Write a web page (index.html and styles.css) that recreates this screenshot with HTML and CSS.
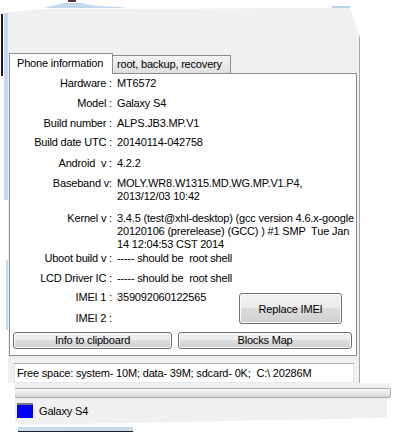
FILE: index.html
```
<!DOCTYPE html>
<html>
    <head>
        <meta charset="UTF-8" />
        <title>Phone information</title>
        <link rel="stylesheet" href="styles.css">
    </head>
    <body>
        <div class="topedge">
            <svg width="398" height="8" viewBox="0 0 398 8">
                <path d="M44 8 L52 6 L60 4 L64 3 L82 3 L90 5 L100 6 L120 7 L126 8 Z" fill="#c3d7ee"/>
                <rect x="68" y="0" width="8" height="2" fill="#5b3050"/>
                <rect x="332" y="6" width="18" height="2" fill="#b9d1f0"/>
            </svg>
        </div>
        <div class="frame">
            <div class="fringe"></div>
            <div class="win">
                <div class="upper">
                    <div class="tabs">
                        <div class="tab active">Phone information</div>
                        <div class="tab">root, backup, recovery</div>
                    </div>
                    <div class="panel">
                        <div class="row"><span class="lbl">Hardware :</span><span class="val">MT6572</span></div>
                        <div class="row"><span class="lbl">Model :</span><span class="val">Galaxy S4</span></div>
                        <div class="row"><span class="lbl">Build number :</span><span class="val">ALPS.JB3.MP.V1</span></div>
                        <div class="row g6"><span class="lbl">Build date UTC :</span><span class="val">20140114-042758</span></div>
                        <div class="row g8"><span class="lbl">Android&nbsp; v :</span><span class="val">4.2.2</span></div>
                        <div class="row"><span class="lbl">Baseband v:</span><span class="val">MOLY.WR8.W1315.MD.WG.MP.V1.P4,<br>2013/12/03 10:42</span></div>
                        <div class="row g9"><span class="lbl">Kernel v :</span><span class="val">3.4.5 (test@xhl-desktop) (gcc version 4.6.x-google<br>20120106 (prerelease) (GCC) ) #1 SMP&nbsp; Tue Jan<br>14 12:04:53 CST 2014</span></div>
                        <div class="row g1"><span class="lbl">Uboot build v :</span><span class="val">----- should be&nbsp; root shell</span></div>
                        <div class="row"><span class="lbl">LCD Driver IC :</span><span class="val">----- should be&nbsp; root shell</span></div>
                        <div class="imei">
                            <div class="imei-rows">
                                <div class="row first"><span class="lbl">IMEI 1 :</span><span class="val">359092060122565</span></div>
                                <div class="row g8"><span class="lbl">IMEI 2 :</span><span class="val"></span></div>
                            </div>
                            <button class="btn replace">Replace IMEI</button>
                        </div>
                        <div class="btnrow">
                            <button class="btn clip">Info to clipboard</button>
                            <button class="btn blocks">Blocks Map</button>
                        </div>
                    </div>
                    <div class="free">Free space: system- 10M; data- 39M; sdcard- 0K;  C:\ 20286M</div>
                </div>
                <div class="bar"></div>
                <div class="list">
                    <span class="swatch"></span>
                    <span>Galaxy S4</span>
                </div>
            </div>
        </div>
        <div class="bottomedge"></div>
    </body>
</html>
```
FILE: styles.css
```
*{
    box-sizing: border-box;
}
body{
    margin: 0;
    background-color: #fff;
    font-family: "Liberation Sans", Arial, sans-serif;
    font-size: 11px;
    letter-spacing: -0.18px;
    color: #000;
}
.topedge{
    height: 8px;
}
.topedge svg{
    display: block;
}
.frame{
    display: flex;
    align-items: flex-start;
}
.fringe{
    width: 8px;
    height: 330px;
    flex: none;
    background:
        linear-gradient(#241818, #241818) 1px 6px / 2px 62px no-repeat,
        linear-gradient(#c4d8ef, #c4d8ef) 4px 5px / 4px 187px no-repeat,
        linear-gradient(#c4d8ef, #c4d8ef) 6px 252px / 3px 70px no-repeat;
}
.win{
    width: 383px;
    height: 417px;
    flex: none;
    background-color: #f0f0f0;
    clip-path: polygon(0 4px, 37px 1px, 342px 0, 352px 30px, 352px 375px, 383px 375px, 383px 390px, 379px 392px, 379px 410px, 12px 417px, 7px 414px, 7px 375px, 0 375px);
}
.upper{
    width: 352px;
    height: 375px;
    padding-top: 45px;
    border-right: 1px solid #a7a7a7;
}

/* tabs */
.tabs{
    display: flex;
    height: 20px;
    margin-left: 1px;
    position: relative;
    z-index: 1;
}
.tab{
    width: 118px;
    height: 18px;
    margin-top: 2px;
    padding-left: 4px;
    line-height: 17px;
    border: 1px solid #898c95;
    border-left: none;
    border-bottom: none;
    background: linear-gradient(#f4f4f4, #e0e0e0);
    white-space: nowrap;
}
.tab.active{
    width: 104px;
    height: 21px;
    margin-top: 0;
    padding-left: 7px;
    line-height: 19px;
    border-left: 1px solid #898c95;
    background: #fff;
}

/* panel */
.panel{
    margin-left: 1px;
    width: 348px;
    height: 283px;
    padding-top: 3px;
    border: 1px solid #898c95;
    background-color: #fff;
}
.row{
    display: flex;
    line-height: 13px;
    margin-top: 7px;
}
.row:first-child{
    margin-top: 0;
}
.row.g1{ margin-top: 1px; }
.row.g6{ margin-top: 6px; }
.row.g8{ margin-top: 8px; }
.row.g9{ margin-top: 9px; }
.lbl{
    width: 102px;
    flex: none;
    text-align: right;
    white-space: nowrap;
}
.val{
    margin-left: 5px;
    white-space: nowrap;
}
.imei{
    display: flex;
    margin-top: 6px;
}
.btn{
    font-family: "Liberation Sans", Arial, sans-serif;
    font-size: 11px;
    letter-spacing: -0.18px;
    color: #000;
    padding: 0;
    border: 1px solid #707070;
    border-radius: 3px;
    background: linear-gradient(#f2f2f2 0%, #ebebeb 50%, #dddddd 50%, #cfcfcf 100%);
    box-shadow: inset 0 0 0 1px #fcfcfc;
}
.replace{
    width: 103px;
    height: 31px;
    margin-top: 2px;
    margin-left: auto;
    margin-right: 14px;
}
.btnrow{
    display: flex;
    gap: 6px;
    margin-top: 7px;
    margin-left: 3px;
}
.btnrow .btn{
    height: 17px;
    line-height: 13px;
}
.clip{
    width: 159px;
}
.blocks{
    width: 174px;
}

/* bottom */
.free{
    margin: 7px 0 0 6px;
    width: 340px;
    height: 20px;
    padding-left: 2px;
    line-height: 18px;
    border: 1px solid;
    border-color: #abadb3 #e2e3ea #e3e9ef #dbdfe6;
    background-color: #fff;
    white-space: pre;
}
.bar{
    margin: 5px 0 0 6px;
    width: 377px;
    height: 10px;
    border: 1px solid #b0b0b0;
    border-radius: 2px;
    background: linear-gradient(#f8f8f8, #e6e6e6 60%, #d2d2d2);
}
.list{
    display: flex;
    align-items: center;
    gap: 6px;
    margin: 5px 0 0 9px;
}
.swatch{
    width: 16px;
    height: 15px;
    border-top: 2px solid #7a7a7a;
    background-color: #0000ff;
}
.bottomedge{
    margin: 2px 0 0 18px;
    width: 115px;
    height: 5px;
    background-color: #c6d9f0;
    border-bottom: 1px solid #222;
}
```
